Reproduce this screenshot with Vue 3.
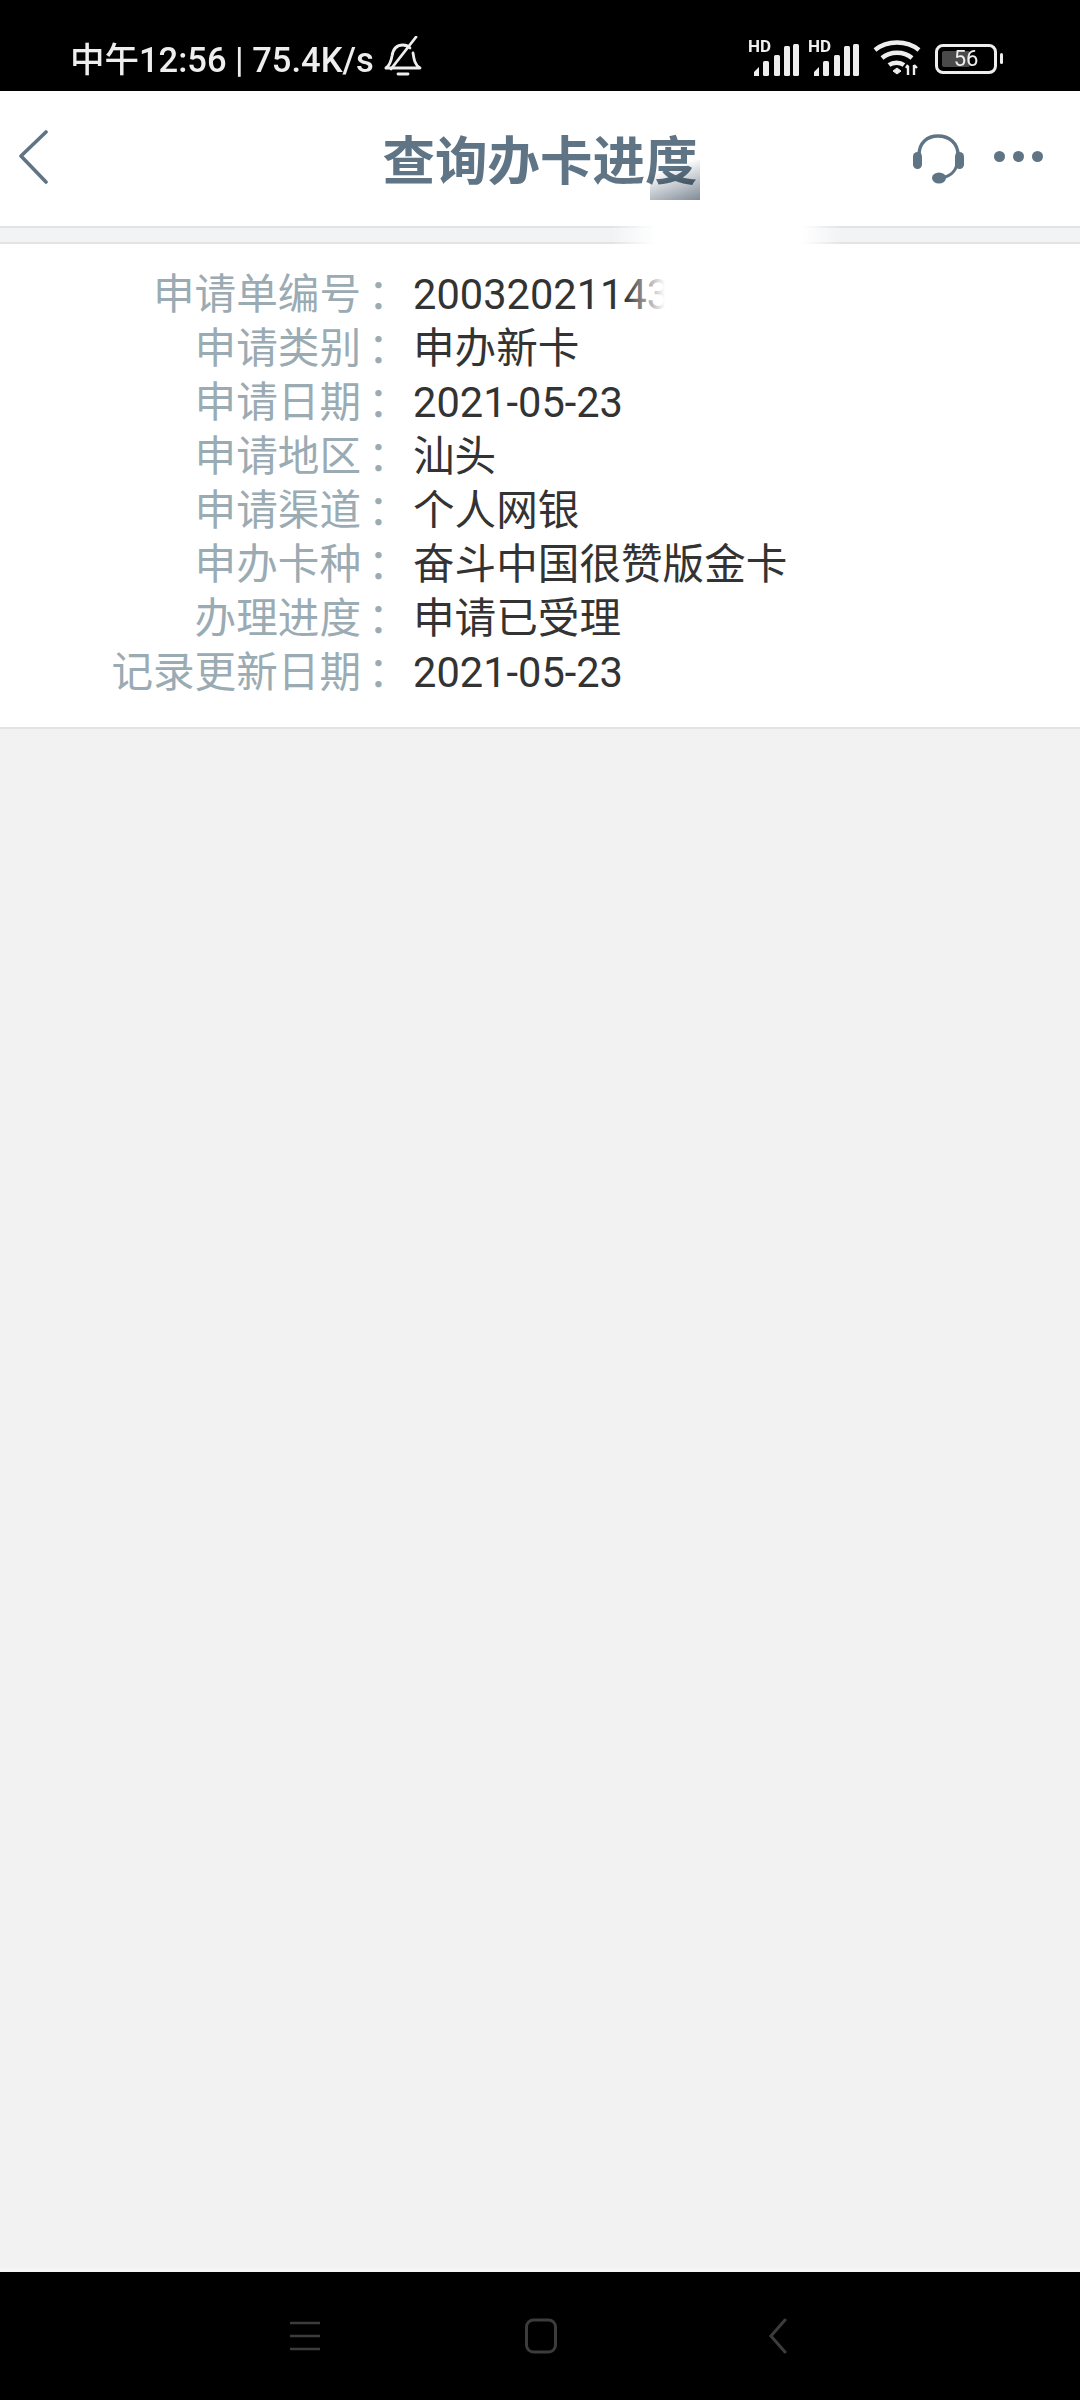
<template>
  <div class="phone">
    <div class="status-bar">
      <div class="status-left">
        <span class="status-text">中午12:56 | 75.4K/s</span>
        <svg class="bell" width="38" height="42" viewBox="0 0 38 42" fill="none" stroke="#eee" stroke-width="2.8" stroke-linecap="round" stroke-linejoin="round">
          <path d="M2 32c4-3 5-6 6-12 1-7 5-11 11-11 3 0 5 1 7 3" />
          <path d="M29 17c1 7 2 12 7 15H2" />
          <path d="M32 1 7 33" />
          <path d="M14 38h10" />
        </svg>
      </div>
      <div class="status-right">
        <div v-for="n in 2" :key="n" class="signal">
          <span class="hd">HD</span>
          <svg width="48" height="32" viewBox="0 0 48 32" fill="#eee">
            <path d="M3 32v-4l5-5v9z" />
            <rect x="12" y="17" width="6" height="15" rx="1.5" />
            <rect x="23" y="11" width="6" height="21" rx="1.5" />
            <rect x="33" y="2" width="6" height="30" rx="1.5" />
            <rect x="42" y="0" width="6" height="32" rx="1.5" />
          </svg>
        </div>
        <svg class="wifi" width="48" height="36" viewBox="0 0 48 36" fill="none" stroke="#eee" stroke-width="4.4">
          <path d="M2 10c12-10 32-10 44 0" />
          <path d="M9 18c8-7 22-7 30 0" />
          <path d="M16 25c4-3 11-3 15 0" />
          <path d="M20 31l4-3 4 3-4 3z" fill="#eee" stroke-width="1" />
          <path d="M35 35v-9M33 28l2-3M41 35v-10M41 25l3 3" stroke-width="2.4" />
        </svg>
        <div class="battery">
          <div class="battery-body">
            <div class="battery-fill"></div>
            <span class="battery-num">56</span>
          </div>
          <div class="battery-nib"></div>
        </div>
      </div>
    </div>

    <header class="title-bar">
      <svg class="back" width="30" height="54" viewBox="0 0 30 54" fill="none" stroke="#5f7485" stroke-width="3.6" stroke-linecap="round" stroke-linejoin="round">
        <path d="M27 2 2 26l25 26" />
      </svg>
      <h1 class="title">查询办卡进度</h1>
      <div class="actions">
        <svg width="56" height="52" viewBox="0 0 56 52" fill="none">
          <path d="M8 25V22C8 10 16 3 27 3s20 7 20 19v3" stroke="#5f7485" stroke-width="3.4" />
          <path d="M46 30c-1 9-8 14-17 15" stroke="#5f7485" stroke-width="3" />
          <rect x="2" y="19" width="9" height="17" rx="4.5" fill="#5f7485" />
          <rect x="44" y="19" width="9" height="17" rx="4.5" fill="#5f7485" />
          <ellipse cx="28" cy="45" rx="7" ry="5.5" fill="#5f7485" />
        </svg>
        <div class="dots">
          <i></i><i></i><i></i>
        </div>
      </div>
      <div class="smudge-title"></div>
    </header>

    <main class="content">
      <div class="gap-strip"></div>
      <section class="card">
        <div v-for="row in rows" :key="row.label" class="row">
          <span class="label">{{ row.label }}</span>
          <span class="colon">：</span>
          <span class="value">{{ row.value }}</span>
        </div>
        <div class="smudge-number"></div>
      </section>
      <div class="smudge-strip"></div>
    </main>

    <nav class="nav-bar">
      <svg width="32" height="30" viewBox="0 0 32 30" stroke="#3c3c3c" stroke-width="2.6">
        <path d="M1 2h30M1 15h30M1 28h30" />
      </svg>
      <svg width="32" height="36" viewBox="0 0 32 36" fill="none" stroke="#3c3c3c" stroke-width="3">
        <rect x="1.5" y="2" width="29" height="32" rx="7" />
      </svg>
      <svg width="18" height="36" viewBox="0 0 18 36" fill="none" stroke="#3c3c3c" stroke-width="3" stroke-linecap="round">
        <path d="M16 2 2 18l14 16" />
      </svg>
    </nav>
  </div>
</template>

<script setup>
const rows = [
  { label: '申请单编号', value: '20032021143' },
  { label: '申请类别', value: '申办新卡' },
  { label: '申请日期', value: '2021-05-23' },
  { label: '申请地区', value: '汕头' },
  { label: '申请渠道', value: '个人网银' },
  { label: '申办卡种', value: '奋斗中国很赞版金卡' },
  { label: '办理进度', value: '申请已受理' },
  { label: '记录更新日期', value: '2021-05-23' },
]
</script>

<style>
html,
body {
  margin: 0;
  background: #f2f2f2;
}
</style>

<style scoped>
.phone {
  width: 1080px;
  height: 2400px;
  display: flex;
  flex-direction: column;
  font-family: Roboto, "Noto Sans CJK SC", sans-serif;
  overflow: hidden;
}

.status-bar {
  height: 91px;
  box-sizing: border-box;
  padding: 28px 77px 0 70px;
  background: #000;
  color: #eee;
  display: flex;
  justify-content: space-between;
  align-items: center;
}

.status-left {
  display: flex;
  align-items: center;
  gap: 10px;
}

.status-text {
  font-size: 34.5px;
  line-height: 40px;
  font-weight: 500;
}

.bell {
  margin-top: -6px;
}

.status-right {
  display: flex;
  align-items: flex-end;
  gap: 12px;
  padding-bottom: 4px;
}

.signal {
  position: relative;
  width: 48px;
  height: 32px;
}

.signal svg {
  display: block;
}

.hd {
  position: absolute;
  left: -3px;
  top: -6px;
  font-size: 17px;
  line-height: 17px;
  font-weight: 700;
  background: #000;
  padding-right: 1px;
}

.wifi {
  margin-left: 2px;
}

.battery {
  display: flex;
  align-items: center;
  gap: 3px;
  margin: 0 0 2px 2px;
}

.battery-body {
  position: relative;
  width: 62px;
  height: 30px;
  box-sizing: border-box;
  border: 3px solid #eee;
  border-radius: 8px;
}

.battery-fill {
  position: absolute;
  left: 4px;
  top: 4px;
  bottom: 4px;
  width: 28px;
  background: #4a4a4a;
  border-radius: 2px;
}

.battery-num {
  position: absolute;
  inset: 0;
  text-align: center;
  font-size: 22px;
  line-height: 24px;
}

.battery-nib {
  width: 3px;
  height: 11px;
  background: #eee;
  border-radius: 2px;
}

.title-bar {
  position: relative;
  height: 135px;
  flex: none;
  background: #fff;
  display: grid;
  grid-template-columns: 1fr auto 1fr;
  align-items: center;
  border-bottom: 2px solid #dfe4e8;
}

.back {
  margin: 0 0 4px 19px;
}

.title {
  margin: 0;
  padding-top: 6px;
  font-size: 52.5px;
  line-height: 72px;
  font-weight: 700;
  color: #5f7485;
}

.actions {
  justify-self: end;
  display: flex;
  align-items: center;
  gap: 27px;
  padding-right: 37px;
}

.dots {
  display: flex;
  gap: 8px;
  margin-bottom: 4px;
}

.dots i {
  display: block;
  width: 11px;
  height: 11px;
  border-radius: 50%;
  background: #5f7485;
}

.smudge-title {
  position: absolute;
  left: 650px;
  top: 69px;
  width: 50px;
  height: 40px;
  background: linear-gradient(160deg, rgba(255, 255, 255, 0) 25%, #7f8b97 100%);
  mix-blend-mode: multiply;
}

.content {
  position: relative;
  flex: 1;
  background: #f2f2f2;
  border-bottom: 4px solid #f5f5f5;
}

.gap-strip {
  height: 14px;
  background: #f1f3f4;
}

.card {
  position: relative;
  background: #fff;
  border-top: 2px solid #e3e3e3;
  border-bottom: 2px solid #e3e3e3;
  padding: 24px 0 27px;
}

.row {
  display: flex;
  height: 54px;
  line-height: 54px;
  font-size: 41.6px;
}

.label {
  width: 361px;
  text-align: right;
  color: #9aabb3;
}

.colon {
  width: 52px;
  padding-left: 7px;
  box-sizing: border-box;
  color: #9aabb3;
  white-space: nowrap;
}

.value {
  color: #333;
}

.smudge-number {
  position: absolute;
  left: 625px;
  top: 20px;
  width: 200px;
  height: 60px;
  background: linear-gradient(90deg, rgba(255, 255, 255, 0), #fff 20%);
}

.smudge-strip {
  position: absolute;
  left: 610px;
  top: -4px;
  width: 233px;
  height: 22px;
  background: linear-gradient(90deg, rgba(255, 255, 255, 0), #fff 20%, #fff 82%, rgba(255, 255, 255, 0));
}

.nav-bar {
  height: 128px;
  flex: none;
  background: #000;
  display: grid;
  grid-template-columns: repeat(3, 32px);
  justify-content: center;
  column-gap: 204px;
  align-items: center;
  padding-left: 1px;
}

.nav-bar svg:last-child {
  margin-left: 8px;
}
</style>
